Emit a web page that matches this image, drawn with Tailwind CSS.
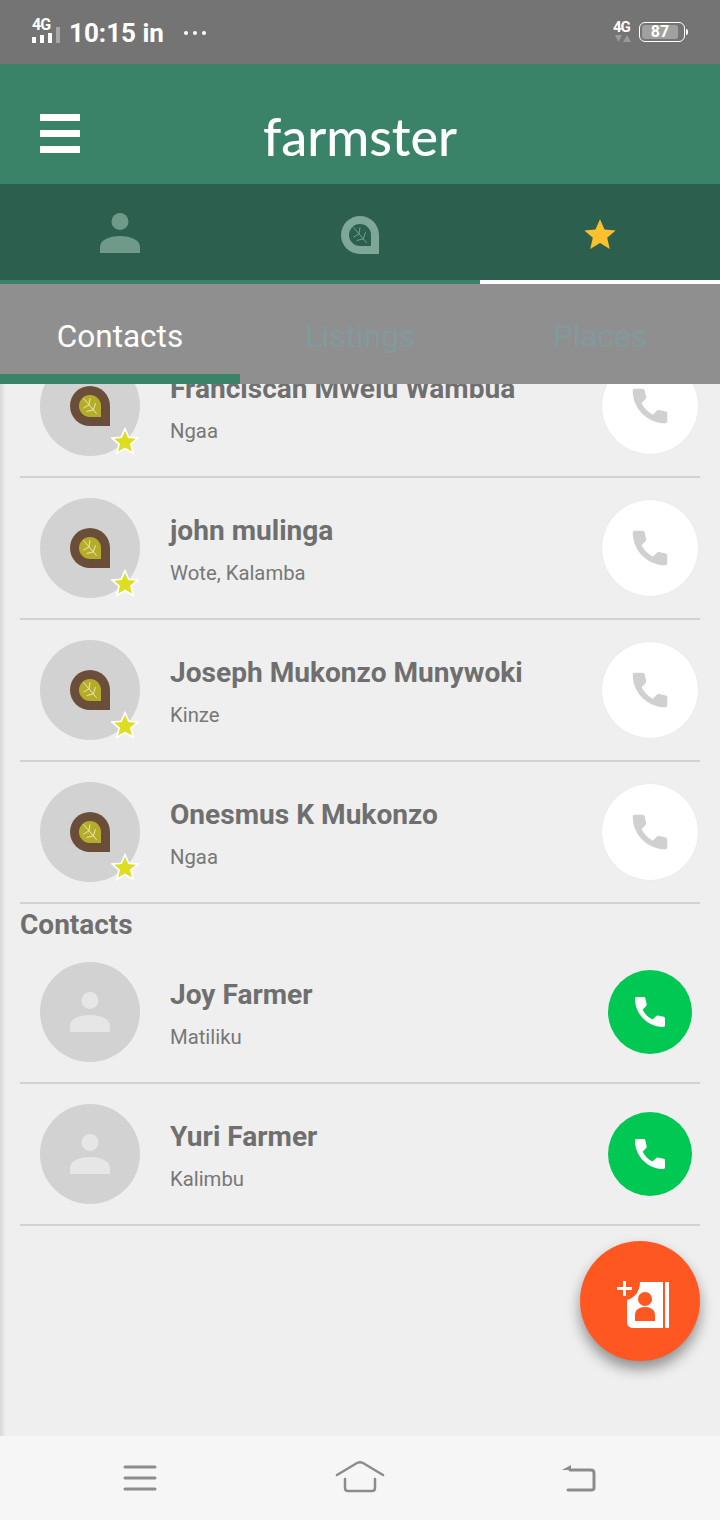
<!DOCTYPE html>
<html lang="en">

<head>
    <meta charset="UTF-8">
    <title>Farmster</title>
    <script src="https://cdn.jsdelivr.net/npm/@tailwindcss/browser@4"></script>
</head>

<body>
    <svg class="hidden">
        <symbol id="phone" viewBox="0 0 24 24">
            <path d="M4 3h4.200c.5 0 .9.4 1 .8l.8 3.600c.1.4 0 .7-.3 1L7.600 10.600c1.400 2.700 3.200 4.500 5.900 5.900l2.200-2.100c.3-.3.6-.4 1-.3l3.500.8c.5.1.8.5.8 1V20c0 .6-.4 1-1 1C10.700 21 3 13.300 3 4c0-.6.4-1 1-1z"></path>
        </symbol>
        <symbol id="person" viewBox="0 0 40 40">
            <circle cx="20" cy="8.500" r="8.500"></circle>
            <path d="M0 40v-6c0-7 9-11 20-11s20 4 20 11v6z"></path>
        </symbol>
        <symbol id="veins" viewBox="0 0 20 20">
            <path d="M4 3l12 14M9 9l-5 3M9 9l1-6M13 13.500l-6 1.500M13 13.500l2-6" fill="none" stroke="currentColor" stroke-width="0.800"></path>
        </symbol>
        <symbol id="star" viewBox="0 0 24 24">
            <path d="M12 1.500l3.200 7.300 7.800.7-5.900 5.200 1.800 7.800-6.900-4.100-6.900 4.100 1.800-7.800L1 9.500l7.800-.7z"></path>
        </symbol>
    </svg>

    <div class="relative w-[720px] h-[1520px] flex flex-col overflow-hidden bg-[#efefef] [font-family:Roboto,sans-serif]">
        <!-- status bar -->
        <div class="h-16 shrink-0 bg-[#747474] flex items-start justify-between text-white">
            <div class="flex items-start pl-8">
                <div class="w-7 pt-[17px]">
                    <div class="text-[16px] leading-[16px] font-bold tracking-[-1px]">4G</div>
                    <div class="flex items-end gap-1 h-4 -mt-[6px]">
                        <div class="w-1 h-[6px] bg-white"></div>
                        <div class="w-1 h-2 bg-white"></div>
                        <div class="w-1 h-[10px] bg-white"></div>
                        <div class="w-1 h-4 bg-[#a6a6a6]"></div>
                    </div>
                </div>
                <div class="ml-[9px] pt-[17px] text-[26px] leading-8 font-bold">10:15 in</div>
                <div class="ml-5 pt-[31px] flex gap-[5px]">
                    <div class="size-1 rounded-full bg-white"></div>
                    <div class="size-1 rounded-full bg-white"></div>
                    <div class="size-1 rounded-full bg-white"></div>
                </div>
            </div>
            <div class="flex items-start pr-8 pt-[20px]">
                <div class="w-[18px] mr-2">
                    <div class="text-[15px] leading-[14px] font-bold tracking-[-1px]">4G</div>
                    <svg class="w-[18px] h-2 mt-[1px]" viewBox="0 0 18 8" fill="#9a9a9a">
                        <path d="M2 0h7l-3.500 7zM10 7l4-7 4 7z"></path>
                    </svg>
                </div>
                <div class="mt-[2px] w-[46px] h-5 border border-white rounded-[6px] p-[2px] pr-[6px]">
                    <div class="h-full bg-[#a0a0a0] rounded-[3px] flex items-center justify-center text-[16px] font-bold leading-none">87</div>
                </div>
                <div class="mt-[9px] ml-[1px] w-[2px] h-[6px] bg-white rounded-r-sm"></div>
            </div>
        </div>

        <!-- app header -->
        <div class="relative h-[120px] shrink-0 bg-[#3a8368] flex items-center justify-center">
            <div class="absolute left-10 top-[50px] flex flex-col gap-[9px]">
                <div class="w-10 h-[7px] bg-white"></div>
                <div class="w-10 h-[7px] bg-white"></div>
                <div class="w-10 h-[7px] bg-white"></div>
            </div>
            <div class="relative mt-[24px] text-white text-[52px] leading-[50px] [font-family:Lato,sans-serif] font-medium">farmster
                <svg class="absolute left-[31px] top-[32px] size-[9px] text-[#7fb3a0]"><use href="#veins"></use></svg>
            </div>
        </div>

        <!-- icon tabs -->
        <div class="h-24 shrink-0 bg-[#2c5f4d] grid grid-cols-3">
            <div class="flex items-center justify-center pt-[2px]">
                <svg class="size-10 text-[#6f9a8a]" fill="currentColor"><use href="#person"></use></svg>
            </div>
            <div class="flex items-center justify-center pt-[6px]">
                <div class="relative size-[38px] rounded-full rounded-br-none bg-[#7ea798] flex items-center justify-center">
                    <div class="size-[22px] rounded-full rounded-br-none bg-[#2c5f4d] text-[#7ea798]">
                        <svg class="size-[22px]"><use href="#veins"></use></svg>
                    </div>
                </div>
            </div>
            <div class="flex items-center justify-center pt-[4px]">
                <svg class="size-[34px] text-[#fbc02d]" fill="currentColor"><use href="#star"></use></svg>
            </div>
        </div>
        <div class="h-1 shrink-0 bg-[#3a8368] flex justify-end">
            <div class="w-60 bg-white"></div>
        </div>

        <!-- text tabs -->
        <div class="relative h-[100px] shrink-0 z-10 bg-[#8f8f8f] grid grid-cols-3 text-[31.500px] text-center">
            <div class="pt-[33px] leading-10 text-white">Contacts</div>
            <div class="pt-[33px] leading-10 text-[#829a9e]">Listings</div>
            <div class="pt-[33px] leading-10 text-[#829a9e]">Places</div>
            <div class="absolute left-0 bottom-0 w-60 h-[10px] bg-[#3a8368]"></div>
        </div>

        <!-- list -->
        <div class="relative flex-1 overflow-hidden">
            <div class="-mt-[48px] mx-5">
                <div class="h-[142px] border-b-2 border-[#d2d2d2] flex items-center">
                    <div class="relative ml-5 size-[100px] rounded-full bg-[#d2d2d2] flex items-center justify-center shrink-0">
                        <div class="size-10 rounded-full rounded-br-none bg-[#6b4e3a] flex items-center justify-center">
                            <div class="size-[22px] rounded-full rounded-br-none bg-[#b5ad2a] text-[#f1eecb]">
                                <svg class="size-[22px]"><use href="#veins"></use></svg>
                            </div>
                        </div>
                        <svg class="absolute left-[71px] top-[71px] size-[28px] text-[#dddd22]" fill="currentColor" stroke="white" stroke-width="1.500"><use href="#star"></use></svg>
                    </div>
                    <div class="ml-[30px] flex-1 self-start mt-[35px]">
                        <div class="h-9 leading-9 text-[28.100px] font-bold text-[#6f6f6f]">Franciscan Mwelu Wambua</div>
                        <div class="mt-[10px] leading-7 text-[20.300px] text-[#777777]">Ngaa</div>
                    </div>
                    <div class="w-[100px] flex justify-center">
                        <div class="size-24 rounded-full bg-white shadow-[0_0_2px_rgba(0,0,0,0.06)] flex items-center justify-center">
                            <svg class="size-[46px] text-[#d0d0d0]" fill="currentColor"><use href="#phone"></use></svg>
                        </div>
                    </div>
                </div>
                <div class="h-[142px] border-b-2 border-[#d2d2d2] flex items-center">
                    <div class="relative ml-5 size-[100px] rounded-full bg-[#d2d2d2] flex items-center justify-center shrink-0">
                        <div class="size-10 rounded-full rounded-br-none bg-[#6b4e3a] flex items-center justify-center">
                            <div class="size-[22px] rounded-full rounded-br-none bg-[#b5ad2a] text-[#f1eecb]">
                                <svg class="size-[22px]"><use href="#veins"></use></svg>
                            </div>
                        </div>
                        <svg class="absolute left-[71px] top-[71px] size-[28px] text-[#dddd22]" fill="currentColor" stroke="white" stroke-width="1.500"><use href="#star"></use></svg>
                    </div>
                    <div class="ml-[30px] flex-1 self-start mt-[35px]">
                        <div class="h-9 leading-9 text-[28.100px] font-bold text-[#6f6f6f]">john mulinga</div>
                        <div class="mt-[10px] leading-7 text-[20.300px] text-[#777777]">Wote, Kalamba</div>
                    </div>
                    <div class="w-[100px] flex justify-center">
                        <div class="size-24 rounded-full bg-white shadow-[0_0_2px_rgba(0,0,0,0.06)] flex items-center justify-center">
                            <svg class="size-[46px] text-[#d0d0d0]" fill="currentColor"><use href="#phone"></use></svg>
                        </div>
                    </div>
                </div>
                <div class="h-[142px] border-b-2 border-[#d2d2d2] flex items-center">
                    <div class="relative ml-5 size-[100px] rounded-full bg-[#d2d2d2] flex items-center justify-center shrink-0">
                        <div class="size-10 rounded-full rounded-br-none bg-[#6b4e3a] flex items-center justify-center">
                            <div class="size-[22px] rounded-full rounded-br-none bg-[#b5ad2a] text-[#f1eecb]">
                                <svg class="size-[22px]"><use href="#veins"></use></svg>
                            </div>
                        </div>
                        <svg class="absolute left-[71px] top-[71px] size-[28px] text-[#dddd22]" fill="currentColor" stroke="white" stroke-width="1.500"><use href="#star"></use></svg>
                    </div>
                    <div class="ml-[30px] flex-1 self-start mt-[35px]">
                        <div class="h-9 leading-9 text-[28.100px] font-bold text-[#6f6f6f]">Joseph Mukonzo Munywoki</div>
                        <div class="mt-[10px] leading-7 text-[20.300px] text-[#777777]">Kinze</div>
                    </div>
                    <div class="w-[100px] flex justify-center">
                        <div class="size-24 rounded-full bg-white shadow-[0_0_2px_rgba(0,0,0,0.06)] flex items-center justify-center">
                            <svg class="size-[46px] text-[#d0d0d0]" fill="currentColor"><use href="#phone"></use></svg>
                        </div>
                    </div>
                </div>
                <div class="h-[142px] border-b-2 border-[#d2d2d2] flex items-center">
                    <div class="relative ml-5 size-[100px] rounded-full bg-[#d2d2d2] flex items-center justify-center shrink-0">
                        <div class="size-10 rounded-full rounded-br-none bg-[#6b4e3a] flex items-center justify-center">
                            <div class="size-[22px] rounded-full rounded-br-none bg-[#b5ad2a] text-[#f1eecb]">
                                <svg class="size-[22px]"><use href="#veins"></use></svg>
                            </div>
                        </div>
                        <svg class="absolute left-[71px] top-[71px] size-[28px] text-[#dddd22]" fill="currentColor" stroke="white" stroke-width="1.500"><use href="#star"></use></svg>
                    </div>
                    <div class="ml-[30px] flex-1 self-start mt-[35px]">
                        <div class="h-9 leading-9 text-[28.100px] font-bold text-[#6f6f6f]">Onesmus K Mukonzo</div>
                        <div class="mt-[10px] leading-7 text-[20.300px] text-[#777777]">Ngaa</div>
                    </div>
                    <div class="w-[100px] flex justify-center">
                        <div class="size-24 rounded-full bg-white shadow-[0_0_2px_rgba(0,0,0,0.06)] flex items-center justify-center">
                            <svg class="size-[46px] text-[#d0d0d0]" fill="currentColor"><use href="#phone"></use></svg>
                        </div>
                    </div>
                </div>

                <div class="h-[38px] pt-[3px] leading-9 text-[28px] font-bold text-[#6f6f6f]">Contacts</div>

                <div class="h-[142px] border-b-2 border-[#d2d2d2] flex items-center">
                    <div class="ml-5 size-[100px] rounded-full bg-[#d2d2d2] flex items-center justify-center shrink-0">
                        <svg class="size-10 text-[#e6e6e6]" fill="currentColor"><use href="#person"></use></svg>
                    </div>
                    <div class="ml-[30px] flex-1 self-start mt-[35px]">
                        <div class="h-9 leading-9 text-[28.100px] font-bold text-[#6f6f6f]">Joy Farmer</div>
                        <div class="mt-[10px] leading-7 text-[20.300px] text-[#777777]">Matiliku</div>
                    </div>
                    <div class="w-[100px] flex justify-center">
                        <div class="size-[84px] rounded-full bg-[#00c853] flex items-center justify-center">
                            <svg class="size-10 text-white" fill="currentColor"><use href="#phone"></use></svg>
                        </div>
                    </div>
                </div>
                <div class="h-[142px] border-b-2 border-[#d2d2d2] flex items-center">
                    <div class="ml-5 size-[100px] rounded-full bg-[#d2d2d2] flex items-center justify-center shrink-0">
                        <svg class="size-10 text-[#e6e6e6]" fill="currentColor"><use href="#person"></use></svg>
                    </div>
                    <div class="ml-[30px] flex-1 self-start mt-[35px]">
                        <div class="h-9 leading-9 text-[28.100px] font-bold text-[#6f6f6f]">Yuri Farmer</div>
                        <div class="mt-[10px] leading-7 text-[20.300px] text-[#777777]">Kalimbu</div>
                    </div>
                    <div class="w-[100px] flex justify-center">
                        <div class="size-[84px] rounded-full bg-[#00c853] flex items-center justify-center">
                            <svg class="size-10 text-white" fill="currentColor"><use href="#phone"></use></svg>
                        </div>
                    </div>
                </div>
            </div>

            <!-- drawer edge shadow -->
            <div class="absolute left-0 top-0 bottom-0 w-[6px] bg-gradient-to-r from-[#d8d8d8] to-transparent"></div>

            <!-- add contact -->
            <div class="absolute left-[580px] top-[857px] size-[120px] rounded-full bg-[#ff5722] shadow-[0_8px_14px_rgba(0,0,0,0.4)] flex items-center justify-center">
                <svg class="size-[60px]" viewBox="0 0 60 60" fill="white">
                    <path d="M13 10h3v6h6v3h-6v6h-3v-6H7v-3h6z"></path>
                    <path d="M30 11h23v46H23c-3.500 0-6-2.500-6-6V29c8-2 13-9 13-18z"></path>
                    <rect x="55" y="11" width="4" height="46" rx="1"></rect>
                    <circle cx="35" cy="28" r="7" fill="#ff5722"></circle>
                    <path d="M25 50v-6c0-5 4-8 10-8s10 3 10 8v6z" fill="#ff5722"></path>
                </svg>
            </div>
        </div>

        <!-- android nav bar -->
        <div class="h-[84px] shrink-0 bg-[#f6f6f6] grid grid-cols-3 px-[30px] relative z-10">
            <div class="flex items-center justify-center">
                <svg class="w-[36px] h-[30px]" viewBox="0 0 36 30" fill="none" stroke="#8c8c8c" stroke-width="3" stroke-linecap="round">
                    <path d="M3 4h30M3 15h30M3 26h30"></path>
                </svg>
            </div>
            <div class="flex items-center justify-center">
                <svg class="w-[50px] h-[32px] -mt-[2px]" viewBox="0 0 50 32" fill="none" stroke="#8c8c8c" stroke-width="2.500" stroke-linecap="round" stroke-linejoin="round">
                    <path d="M2 14L22 2q3-1.500 6 0l20 12"></path>
                    <path d="M10 18v9q0 3 3 3h24q3 0 3-3v-9"></path>
                </svg>
            </div>
            <div class="flex items-center justify-center">
                <svg class="w-[36px] h-[30px] mr-1" viewBox="0 0 36 30" fill="none" stroke="#8c8c8c" stroke-width="3" stroke-linecap="round" stroke-linejoin="round">
                    <path d="M10 7h21q3 0 3 3v15q0 2-3 2H8"></path>
                    <path d="M2 7l9-5v5z" fill="#8c8c8c" stroke="none"></path>
                </svg>
            </div>
        </div>
    </div>
</body>

</html>
